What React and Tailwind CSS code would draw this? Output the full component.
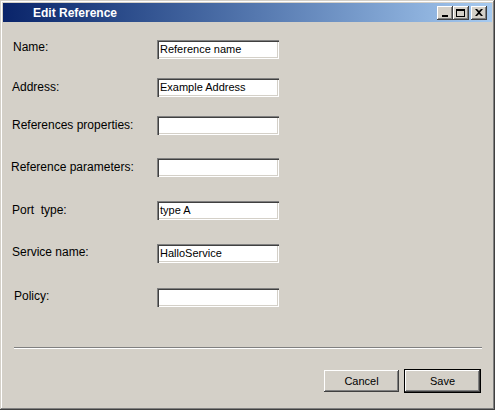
import React from "react";

const fields = [
  { label: "Name:", value: "Reference name", mt: "mt-[18px]", pl: "pl-[10px]", lift: "-mt-[5px]" },
  { label: "Address:", value: "Example Address", mt: "mt-[19px]", pl: "pl-[9px]", lift: "-mt-[2px]" },
  { label: "References properties:", value: "", mt: "mt-[19px]", pl: "pl-[9px]", lift: "-mt-[1px]" },
  { label: "Reference parameters:", value: "", mt: "mt-[23px]", pl: "pl-[8px]", lift: "-mt-[1px]" },
  { label: "Port  type:", value: "type A", mt: "mt-[24px]", pl: "pl-[9px]", lift: "-mt-[1px]" },
  { label: "Service name:", value: "HalloService", mt: "mt-[24px]", pl: "pl-[9px]", lift: "-mt-[3px]" },
  { label: "Policy:", value: "", mt: "mt-[25px]", pl: "pl-[11px]", lift: "-mt-[3px]" },
];

function CaptionButton({ children, className = "" }) {
  return (
    <div
      className={`w-[16px] h-[14px] bg-[#d4d0c8] flex items-center justify-center shadow-[inset_-1px_-1px_#404040,inset_1px_1px_#ffffff,inset_-2px_-2px_#808080] ${className}`}
    >
      {children}
    </div>
  );
}

function Field({ label, value, mt, pl, lift }) {
  return (
    <div className={`flex items-center h-[19px] ${mt}`}>
      <div className={`w-[154px] shrink-0 ${pl} ${lift} text-[12px] text-black whitespace-pre`}>{label}</div>
      <div className="w-[122px] h-[19px] bg-white shadow-[inset_1px_1px_#808080,inset_2px_2px_#404040,inset_-1px_-1px_#ffffff,inset_-2px_-2px_#d4d0c8] pl-[3px] flex items-center text-[11px] text-black">
        {value}
      </div>
    </div>
  );
}

function PushButton({ children, isDefault }) {
  const base =
    "h-[22px] w-[75px] bg-[#d4d0c8] flex items-center justify-center text-[11px] text-black";
  if (isDefault) {
    return (
      <div className="border border-black">
        <div className={`${base} shadow-[inset_-1px_-1px_#404040,inset_1px_1px_#ffffff,inset_-2px_-2px_#808080]`}>
          {children}
        </div>
      </div>
    );
  }
  return (
    <div
      className={`${base} mt-[1px] shadow-[inset_-1px_-1px_#404040,inset_1px_1px_#ffffff,inset_-2px_-2px_#808080]`}
    >
      {children}
    </div>
  );
}

export default function App() {
  return (
    <div
      className="w-[495px] h-[410px] bg-[#d4d0c8] p-[3px] flex flex-col shadow-[inset_-1px_-1px_#404040,inset_1px_1px_#d4d0c8,inset_-2px_-2px_#808080,inset_2px_2px_#ffffff]"
      style={{ fontFamily: '"Liberation Sans", Arial, sans-serif' }}
    >
      {/* Title bar */}
      <div className="h-[19px] shrink-0 flex items-center bg-gradient-to-r from-[#0a246a] to-[#a6caf0] pr-[5px]">
        <div className="ml-[30px] text-[12px] font-bold text-white leading-none">Edit Reference</div>
        <div className="ml-auto flex items-center">
          <CaptionButton>
            <div className="w-[6px] h-[2px] bg-black mt-[6px] -ml-[1px]" />
          </CaptionButton>
          <CaptionButton>
            <div className="w-[9px] h-[8px] border border-black border-t-2 -ml-[1px]" />
          </CaptionButton>
          <CaptionButton className="ml-[2px]">
            <svg width="8" height="7" viewBox="0 0 8 7" className="-ml-[1px]">
              <path d="M0 0h2l2 2 2-2h2L5 3.5 8 7H6L4 5 2 7H0l3-3.5z" fill="black" />
            </svg>
          </CaptionButton>
        </div>
      </div>

      {/* Form */}
      <div className="flex flex-col">
        {fields.map((f) => (
          <Field key={f.label} {...f} />
        ))}
      </div>

      {/* Separator */}
      <div className="mt-[40px] ml-[11px] w-[468px] h-[2px] border-t border-[#808080] border-b border-b-white shrink-0" />

      {/* Buttons */}
      <div className="mt-[20px] flex justify-end gap-[5px] pr-[11px]">
        <PushButton>Cancel</PushButton>
        <PushButton isDefault>Save</PushButton>
      </div>
    </div>
  );
}
